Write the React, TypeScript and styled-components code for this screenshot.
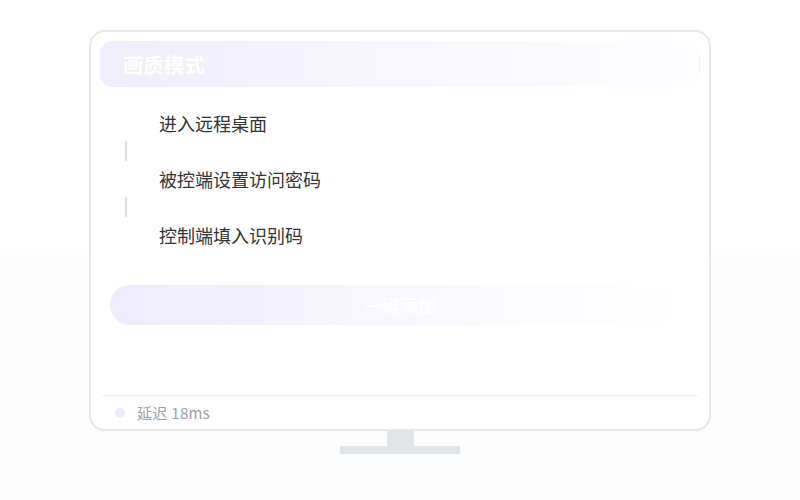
import React from 'react';
import styled, { createGlobalStyle } from 'styled-components';

const GlobalStyle = createGlobalStyle`
  html, body {
    margin: 0;
    padding: 0;
  }
  body {
    width: 800px;
    height: 500px;
    overflow: hidden;
    background: linear-gradient(to bottom, #ffffff 0, #ffffff 250px, #fcfcfd 262px, #fcfcfd 100%);
    font-family: "Noto Sans CJK SC", "Noto Sans", sans-serif;
  }
`;

const steps = ['进入远程桌面', '被控端设置访问密码', '控制端填入识别码'];

const Stage = styled.div`
  display: flex;
  flex-direction: column;
  align-items: center;
  padding-top: 30px;
`;

const Screen = styled.div`
  box-sizing: border-box;
  width: 622px;
  height: 401px;
  border: 2px solid #e6e8ec;
  border-radius: 16px;
  background: #ffffff;
  padding: 9px 9px 0;
  display: flex;
  flex-direction: column;
`;

const Header = styled.div`
  height: 46px;
  border-radius: 12px;
  background: linear-gradient(to right, #f1eefd 0%, #f7f5fe 45%, #fdfcff 100%);
  display: flex;
  align-items: center;
  justify-content: space-between;
  padding: 0 0 0 23px;
`;

const Title = styled.span`
  color: #ffffff;
  font-size: 20px;
  font-weight: 700;
  letter-spacing: 0.5px;
`;

const HeaderEdge = styled.span`
  width: 1px;
  height: 20px;
  background: #f0f0f5;
`;

const StepList = styled.div`
  display: flex;
  flex-direction: column;
  margin-top: 18px;
`;

const StepRow = styled.div`
  height: 36px;
  display: grid;
  grid-template-columns: 32px 1fr;
  column-gap: 17px;
  align-items: center;
  padding-left: 10px;
`;

const StepMarker = styled.span`
  width: 10px;
  height: 10px;
  justify-self: center;
  border-radius: 50%;
  background: #ffffff;
`;

const StepText = styled.span`
  font-size: 18px;
  color: #333333;
`;

const Connector = styled.div`
  width: 2px;
  height: 20px;
  margin-left: 25px;
  background: #dcdde5;
`;

const AddButton = styled.button`
  margin: 32px 10px 0;
  height: 40px;
  border: none;
  border-radius: 20px;
  background: linear-gradient(to right, #efebfd 0%, #f8f6fe 45%, #ffffff 100%);
  color: #ffffff;
  font-family: inherit;
  font-size: 18px;
  padding: 0;
  cursor: pointer;
`;

const Footer = styled.div`
  margin: auto 2px 0;
  height: 33px;
  border-top: 1px solid #eef0f3;
  display: flex;
  align-items: center;
  gap: 12px;
  padding-left: 13px;
`;

const StatusDot = styled.span`
  width: 10px;
  height: 10px;
  border-radius: 50%;
  background: #eeeafc;
`;

const Latency = styled.span`
  font-size: 15px;
  color: #9aa0aa;
  letter-spacing: 0.3px;
`;

const Neck = styled.div`
  width: 27px;
  height: 15px;
  background: #e1e4e8;
`;

const Base = styled.div`
  width: 120px;
  height: 8px;
  background: #e1e4e8;
`;

export default function App() {
  return (
    <>
      <GlobalStyle />
      <Stage>
        <Screen>
          <Header>
            <Title>画质模式</Title>
            <HeaderEdge />
          </Header>
          <StepList>
            {steps.map((s, i) => (
              <React.Fragment key={s}>
                {i > 0 && <Connector />}
                <StepRow>
                  <StepMarker />
                  <StepText>{s}</StepText>
                </StepRow>
              </React.Fragment>
            ))}
          </StepList>
          <AddButton>一键添加</AddButton>
          <Footer>
            <StatusDot />
            <Latency>延迟 18ms</Latency>
          </Footer>
        </Screen>
        <Neck />
        <Base />
      </Stage>
    </>
  );
}
